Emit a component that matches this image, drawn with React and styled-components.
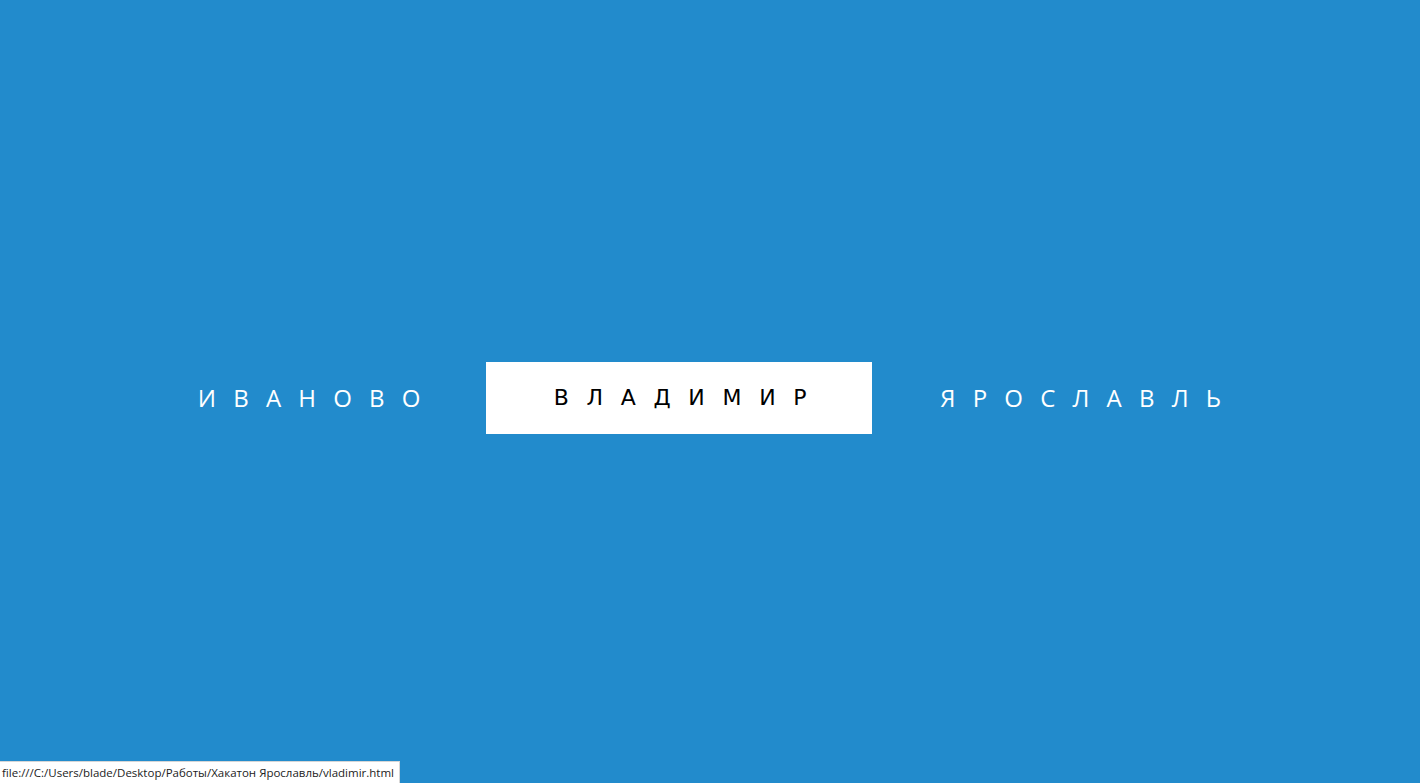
import styled, { createGlobalStyle } from "styled-components";

const Global = createGlobalStyle`
  html, body {
    margin: 0;
    padding: 0;
    background: #228bcc;
  }
`

const Page = styled.div`
  width: 100%;
  height: 783px;
  background: #228bcc;
  display: flex;
  align-items: center;
  justify-content: center;
  padding-top: 13px;
  box-sizing: border-box;
`

const Nav = styled.nav`
  display: flex;
  align-items: center;
  padding-right: 4px;
`

const City = styled.a`
  display: block;
  height: 72px;
  line-height: 72px;
  padding: 0 48px 0 68px;
  font-family: ${p => p.active ? `"DejaVu Sans", Verdana, sans-serif` : `"Open Sans", Arial, sans-serif`};
  font-size: ${p => p.active ? "22px" : "24px"};
  letter-spacing: ${p => p.active ? "17.7px" : "17.2px"};
  color: ${p => p.active ? "#000" : "#fff"};
  background: ${p => p.active ? "#fff" : "transparent"};
  text-decoration: none;
  white-space: nowrap;
`

const StatusBar = styled.div`
  position: fixed;
  left: 0;
  bottom: 0;
  height: 21px;
  line-height: 21px;
  padding: 0 5px 0 2px;
  background: #fff;
  border-top: 1px solid #d6d6d6;
  border-right: 1px solid #d6d6d6;
  font-family: "Open Sans", Arial, sans-serif;
  font-size: 11.5px;
  color: #222;
`

export default function App() {
  return (
    <>
      <Global />
      <Page>
        <Nav>
          <City href="#">ИВАНОВО</City>
          <City href="#" active>ВЛАДИМИР</City>
          <City href="#">ЯРОСЛАВЛЬ</City>
        </Nav>
      </Page>
      <StatusBar>file:///C:/Users/blade/Desktop/Работы/Хакатон Ярославль/vladimir.html</StatusBar>
    </>
  )
}
